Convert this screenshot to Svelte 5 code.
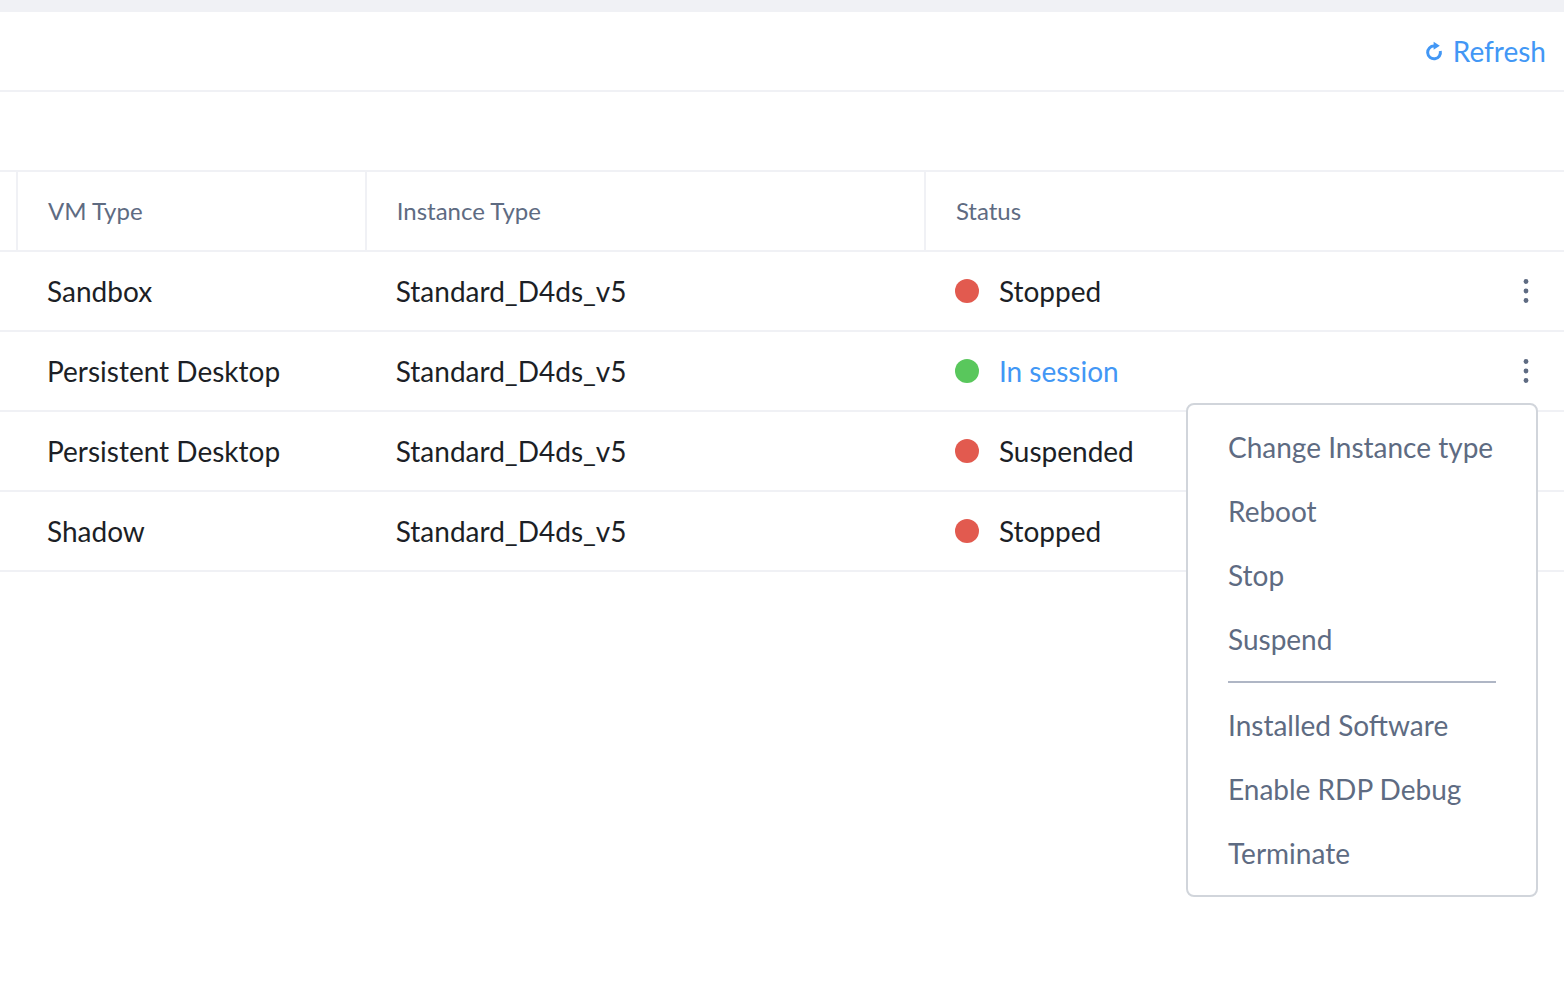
<script lang="ts">
	interface Vm {
		id: number;
		type: string;
		instance: string;
		status: string;
		running: boolean;
	}

	const vms: Vm[] = [
		{ id: 1, type: 'Sandbox', instance: 'Standard_D4ds_v5', status: 'Stopped', running: false },
		{ id: 2, type: 'Persistent Desktop', instance: 'Standard_D4ds_v5', status: 'In session', running: true },
		{ id: 3, type: 'Persistent Desktop', instance: 'Standard_D4ds_v5', status: 'Suspended', running: false },
		{ id: 4, type: 'Shadow', instance: 'Standard_D4ds_v5', status: 'Stopped', running: false },
	];

	const powerActions = ['Change Instance type', 'Reboot', 'Stop', 'Suspend'];
	const manageActions = ['Installed Software', 'Enable RDP Debug', 'Terminate'];

	let openId = $state<number | null>(2);

	const toggleMenu = (id: number) => {
		openId = openId === id ? null : id;
	};

	const closeMenu = () => {
		openId = null;
	};
</script>

<svelte:window onkeydown={(e) => e.key === 'Escape' && closeMenu()} />

<main>
	<div class="toolbar">
		<button class="refresh" type="button">
			<svg width="18" height="20" viewBox="0 0 18 20" aria-hidden="true">
				<path d="M15.3 10A6.4 6.4 0 1 1 9.2 5" fill="none" stroke="currentColor" stroke-width="3" />
				<path d="M8.6 0.8 14.8 4.8 8.6 8.8Z" fill="currentColor" />
			</svg>
			<span>Refresh</span>
		</button>
	</div>
	<div class="filters"></div>

	<table>
		<colgroup>
			<col class="col-edge" />
			<col class="col-type" />
			<col class="col-instance" />
			<col />
			<col class="col-actions" />
		</colgroup>
		<thead>
			<tr>
				<td></td>
				<th scope="col">VM Type</th>
				<th scope="col">Instance Type</th>
				<th scope="col" colspan="2">Status</th>
			</tr>
		</thead>
		<tbody>
			{#each vms as vm (vm.id)}
				<tr>
					<td></td>
					<td>{vm.type}</td>
					<td>{vm.instance}</td>
					<td>
						<div class="status">
							<span class="dot" class:running={vm.running}></span>
							{#if vm.running}
								<a href="#session">{vm.status}</a>
							{:else}
								<span>{vm.status}</span>
							{/if}
						</div>
					</td>
					<td class="actions">
						<button
							class="kebab"
							type="button"
							aria-label="Actions for {vm.type}"
							aria-expanded={openId === vm.id}
							onclick={() => toggleMenu(vm.id)}>
							<svg width="6" height="26" viewBox="0 0 6 26" aria-hidden="true">
								<circle cx="3" cy="3.5" r="2.4" />
								<circle cx="3" cy="13" r="2.4" />
								<circle cx="3" cy="22.5" r="2.4" />
							</svg>
						</button>
						{#if openId === vm.id}
							<div class="menu">
								{#each powerActions as action}
									<button type="button" onclick={closeMenu}>{action}</button>
								{/each}
								<hr />
								{#each manageActions as action}
									<button type="button" onclick={closeMenu}>{action}</button>
								{/each}
							</div>
						{/if}
					</td>
				</tr>
			{/each}
		</tbody>
	</table>
</main>

<style>
	:global(body) {
		margin: 0;
		background-color: #ffffff;
	}

	main {
		box-sizing: border-box;
		min-height: 100vh;
		border-top: 12px solid #f0f1f5;
		font-family: Lato, 'Liberation Sans', sans-serif;
		font-size: 28px;
		line-height: 40px;
		color: #1c1f26;
	}

	button {
		padding: 0;
		border: none;
		background: none;
		font: inherit;
		color: inherit;
		cursor: pointer;
	}

	.toolbar,
	.filters {
		display: flex;
		align-items: center;
		justify-content: flex-end;
		box-sizing: border-box;
		height: 80px;
		padding: 0 18px;
		border-bottom: 2px solid #f0f1f5;
	}

	.refresh {
		display: flex;
		align-items: center;
		gap: 10px;
		color: #4297f5;
	}

	table {
		width: 100%;
		table-layout: fixed;
		border-collapse: separate;
		border-spacing: 0;
	}

	.col-edge {
		width: 18px;
	}

	.col-type {
		width: 22.3%;
	}

	.col-instance {
		width: 35.75%;
	}

	.col-actions {
		width: 76px;
	}

	th,
	td {
		box-sizing: border-box;
		height: 80px;
		padding: 0 0 0 29px;
		border-bottom: 2px solid #f0f1f5;
		text-align: left;
		white-space: nowrap;
	}

	th {
		padding-left: 30px;
		border-right: 2px solid #f0f1f5;
		font-size: 24px;
		font-weight: 400;
		color: #5e6b82;
	}

	th:last-child {
		border-right: none;
	}

	td:first-child {
		padding: 0;
	}

	thead td {
		border-right: 2px solid #f0f1f5;
	}

	.status {
		display: flex;
		align-items: center;
		gap: 20px;
	}

	.dot {
		width: 24px;
		height: 24px;
		border-radius: 50%;
		background-color: #e25a4f;
	}

	.dot.running {
		background-color: #59c75c;
	}

	a {
		color: #4297f5;
		text-decoration: none;
	}

	.actions {
		position: relative;
		padding: 0;
	}

	.kebab {
		display: flex;
		justify-content: center;
		width: 100%;
	}

	.kebab svg {
		fill: #5e6b82;
	}

	.menu {
		position: absolute;
		top: 71px;
		right: 26px;
		z-index: 1;
		display: flex;
		flex-direction: column;
		box-sizing: border-box;
		min-width: 352px;
		padding: 10px 40px;
		border: 2px solid #d1d5db;
		border-radius: 8px;
		background-color: #ffffff;
		color: #5e6b82;
	}

	.menu button {
		height: 64px;
		text-align: left;
	}

	.menu hr {
		width: 100%;
		height: 2px;
		margin: 10px 0;
		border: none;
		background-color: #afb6c5;
	}
</style>
